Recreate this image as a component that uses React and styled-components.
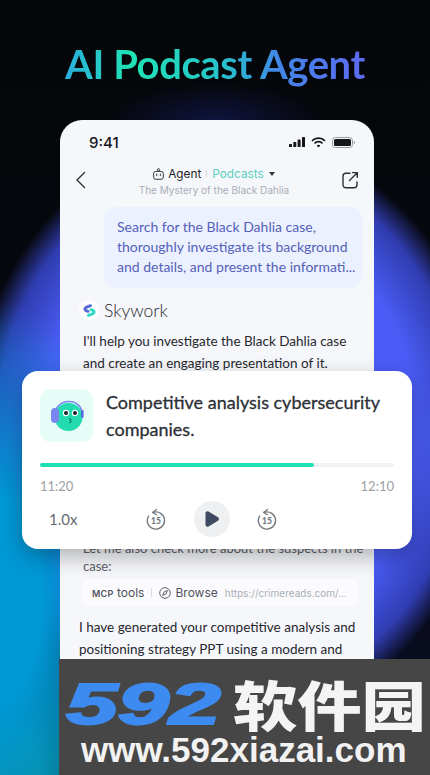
import React from 'react';
import styled, { createGlobalStyle } from 'styled-components';

const GlobalStyle = createGlobalStyle`
  html, body { margin: 0; padding: 0; background: #050608; }
  * { box-sizing: border-box; }
`;

const font = `"Lato", "Noto Sans", sans-serif`;

const Page = styled.div`
  position: relative;
  width: 430px;
  height: 775px;
  overflow: hidden;
  font-family: ${font};
  background:
    radial-gradient(ellipse 110px 40px at 215px 122px, rgba(30, 40, 140, 0.4), rgba(30, 40, 140, 0) 100%),
    radial-gradient(ellipse 150px 300px at -10px 600px, #0098d6 35%, rgba(0, 130, 215, 0) 100%),
    radial-gradient(ellipse 130px 170px at 0px 775px, #0a8c92 30%, rgba(10, 140, 146, 0) 100%),
    radial-gradient(ellipse 260px 297px at 230px 430px, #4a5cf5 72%, rgba(58, 74, 216, 0.8) 90%, rgba(30, 40, 130, 0) 100%),
    linear-gradient(180deg, #050608 0%, #07080f 40%, #0a0d24 100%);
`;

const Title = styled.h1`
  margin: 0;
  height: 120px;
  padding-top: 39px;
  text-align: center;
  font-size: 40px;
  line-height: 50px;
  font-weight: 700;
  letter-spacing: -0.4px;
  white-space: nowrap;
  span {
    background: linear-gradient(90deg, #2aaedd 0%, #1fe3b4 22%, #27c4cc 52%, #4285e8 72%, #5d6af2 100%);
    -webkit-background-clip: text;
    background-clip: text;
    color: transparent;
  }
`;

const Phone = styled.div`
  width: 314px;
  height: 655px;
  margin-left: 60px;
  background: #f6f7fb;
  border-radius: 22px 22px 0 0;
  overflow: hidden;
`;

const StatusBar = styled.div`
  display: flex;
  align-items: center;
  justify-content: space-between;
  height: 40px;
  padding: 4px 19px 0 29px;
  font-family: "Inter", sans-serif;
  font-size: 15px;
  font-weight: 500;
  color: #15161a;
`;

const StatusIcons = styled.div`
  display: flex;
  align-items: center;
  gap: 6px;
`;

const NavBar = styled.div`
  display: flex;
  align-items: center;
  justify-content: space-between;
  height: 43px;
  margin-bottom: 4px;
  padding: 0 15px;
`;

const NavCenter = styled.div`
  display: flex;
  flex-direction: column;
  align-items: center;
  gap: 1px;
`;

const NavTabs = styled.div`
  display: flex;
  align-items: center;
  gap: 4px;
  font-family: "Inter", sans-serif;
  font-size: 11.8px;
  line-height: 16px;
  color: #24262b;
`;

const TabDivider = styled.i`
  width: 1px;
  height: 7px;
  margin: 0 1px;
  background: #d5d7dc;
`;

const ActiveTab = styled.span`
  color: #5ccfbe;
`;

const Caret = styled.i`
  width: 0;
  height: 0;
  margin-left: 1px;
  border-left: 3.5px solid transparent;
  border-right: 3.5px solid transparent;
  border-top: 4px solid #33353a;
`;

const NavSubtitle = styled.div`
  font-family: "Inter", sans-serif;
  font-size: 10px;
  line-height: 15px;
  color: #a9adb8;
  white-space: nowrap;
`;

const Bubble = styled.div`
  width: 258px;
  height: 81px;
  margin: 0 0 0 44px;
  padding: 10px 12px 0 13px;
  background: #ecf1ff;
  border-radius: 12px;
  font-size: 14px;
  line-height: 20px;
  color: #5561b9;
  white-space: nowrap;
`;

const Brand = styled.div`
  display: flex;
  align-items: center;
  gap: 5px;
  margin: 10px 0 0 19px;
  height: 24px;
  font-size: 17.5px;
  font-weight: 300;
  color: #25272c;
`;

const BrandMark = styled.div`
  display: flex;
  align-items: center;
  justify-content: center;
  width: 20px;
  height: 20px;
  border-radius: 50%;
  background: #fff;
`;

const Paragraph = styled.p`
  margin: ${p => p.$top || 0}px 0 0 ${p => p.$left || 23}px;
  font-size: 13.5px;
  line-height: 21.5px;
  color: #26282e;
  white-space: nowrap;
`;

const MutedParagraph = styled.p`
  margin: 165px 0 0 23px;
  font-size: 13px;
  line-height: 18px;
  color: #5d6068;
  white-space: nowrap;
`;

const ToolBox = styled.div`
  display: flex;
  align-items: center;
  width: 274px;
  height: 27px;
  margin: 4px 0 0 23px;
  padding: 0 9px;
  background: #fbfbfd;
  border-radius: 3px;
  font-family: "Inter", sans-serif;
  color: #50535b;
  white-space: nowrap;
`;

const ToolName = styled.span`
  font-size: 12px;
  b { font-size: 9px; font-weight: 600; letter-spacing: 0.3px; }
`;

const ToolDivider = styled.i`
  flex: none;
  width: 1px;
  height: 9px;
  margin: 0 7px;
  background: #d9dbe0;
`;

const BrowseLabel = styled.span`
  margin: 0 7px 0 4px;
  font-size: 12px;
`;

const ToolUrl = styled.span`
  font-size: 10px;
  color: #a9adb5;
`;

const Player = styled.div`
  position: absolute;
  left: 22px;
  top: 371px;
  width: 390px;
  height: 178px;
  padding: 18px 18px 0;
  background: #fff;
  border-radius: 16px;
  box-shadow: 0 8px 22px rgba(0, 0, 0, 0.28);
`;

const PlayerHead = styled.div`
  display: flex;
  gap: 13px;
`;

const Cover = styled.div`
  display: flex;
  align-items: center;
  justify-content: center;
  flex: none;
  width: 53px;
  height: 53px;
  background: #e6fcf7;
  border-radius: 10px;
`;

const PlayerTitle = styled.div`
  font-size: 18px;
  line-height: 27px;
  color: #2c3037;
  -webkit-text-stroke: 0.3px #2c3037;
`;

const Track = styled.div`
  height: 4px;
  margin-top: 20px;
  background: #f0f1f3;
  border-radius: 2px;
`;

const Fill = styled.div`
  height: 100%;
  background: #1fe0b5;
  border-radius: 2px;
`;

const Times = styled.div`
  display: flex;
  justify-content: space-between;
  margin-top: 11px;
  font-size: 13px;
  line-height: 16px;
  color: #9b9fa6;
`;

const Controls = styled.div`
  display: flex;
  align-items: center;
  margin-top: 7px;
  height: 36px;
`;

const Speed = styled.span`
  width: 106px;
  padding-left: 9px;
  font-size: 15px;
  color: #666a70;
`;

const PlayButton = styled.div`
  display: flex;
  align-items: center;
  justify-content: center;
  width: 36px;
  height: 36px;
  margin: 0 27px 0 28px;
  border-radius: 50%;
  background: #eef0f2;
`;

const Watermark = styled.div`
  position: absolute;
  left: 59px;
  top: 659px;
  width: 371px;
  height: 116px;
  background: #464646;
`;

const MarkTop = styled.div`
  display: flex;
  align-items: center;
  height: 72px;
  padding: 18px 0 0 7px;
`;

const MarkNumber = styled.span`
  display: inline-block;
  width: 160px;
  font-family: "Liberation Sans", sans-serif;
  font-size: 58px;
  line-height: 54px;
  font-weight: 700;
  font-style: italic;
  color: #3d8bf0;
  -webkit-text-stroke: 2px #3d8bf0;
  transform: scaleX(1.6);
  transform-origin: left center;
`;

const MarkName = styled.span`
  margin-left: 7px;
  font-family: "Noto Sans CJK SC", sans-serif;
  font-size: 54px;
  line-height: 54px;
  font-weight: 900;
  color: #f4f4f4;
  white-space: nowrap;
  transform: scaleX(1.19);
  transform-origin: left center;
`;

const MarkUrl = styled.div`
  padding-left: 22px;
  font-family: "Liberation Sans", sans-serif;
  font-size: 35px;
  line-height: 38px;
  font-weight: 700;
  color: #f2f2f2;
  white-space: nowrap;
`;

const SignalIcon = () => (
  <svg width="16" height="10" viewBox="0 0 16 10" fill="#15161a">
    <rect x="0" y="7" width="3" height="3" rx="0.6" />
    <rect x="4.3" y="5" width="3" height="5" rx="0.6" />
    <rect x="8.6" y="2.5" width="3" height="7.5" rx="0.6" />
    <rect x="13" y="0" width="3" height="10" rx="0.6" />
  </svg>
);

const WifiIcon = () => (
  <svg width="15" height="11" viewBox="0 0 15 11" fill="none" stroke="#15161a" strokeWidth="1.7">
    <path d="M1 3.8a9.4 9.4 0 0 1 13 0" />
    <path d="M3.5 6.3a5.7 5.7 0 0 1 8 0" />
    <path d="M7.5 10.6 5.7 8.6a2.5 2.5 0 0 1 3.6 0z" fill="#15161a" stroke="none" />
  </svg>
);

const BatteryIcon = () => (
  <svg width="23" height="11" viewBox="0 0 23 11">
    <rect x="0.5" y="0.5" width="20" height="10" rx="3" fill="none" stroke="#9b9ca0" />
    <rect x="2" y="2" width="17" height="7" rx="1.6" fill="#15161a" />
    <path d="M21.8 3.8c.8.3 1.2 1 1.2 1.7s-.4 1.4-1.2 1.7z" fill="#9b9ca0" />
  </svg>
);

const BackIcon = () => (
  <svg width="12" height="22" viewBox="0 0 12 22" fill="none" stroke="#2c2e33" strokeWidth="1.4" strokeLinecap="round" strokeLinejoin="round">
    <path d="M9.5 1.5 2 9l7.5 7.5" />
  </svg>
);

const ShareIcon = () => (
  <svg width="18" height="22" viewBox="0 0 18 22" fill="none" stroke="#2c2e33" strokeWidth="1.4" strokeLinecap="round" strokeLinejoin="round">
    <path d="M9 2.2H5a3 3 0 0 0-3 3v8.6a3 3 0 0 0 3 3h8a3 3 0 0 0 3-3V11" />
    <path d="M8.5 9.5 16 2M11.5 1.6h4.8v4.6" />
  </svg>
);

const RobotIcon = () => (
  <svg width="11" height="12" viewBox="0 0 11 12" fill="none" stroke="#33353a" strokeWidth="1">
    <rect x="0.7" y="3.4" width="9.6" height="7.9" rx="2" />
    <circle cx="5.5" cy="1.7" r="1.1" />
    <path d="M3.7 6v1.6M7.3 6v1.6" strokeLinecap="round" />
  </svg>
);

const SkyworkMark = () => (
  <svg width="13" height="13" viewBox="0 0 13 13" fill="none" strokeWidth="2.8" strokeLinecap="round">
    <path d="M7.5 1.6 3 3.4C1.4 4.2 1.4 6 3 6.6l2 .8" stroke="#5868d8" />
    <path d="M5.5 11.4 10 9.6c1.6-.8 1.6-2.6 0-3.2l-2-.8" stroke="#2fd8c0" />
  </svg>
);

const AvatarIcon = () => (
  <svg width="36" height="36" viewBox="0 0 36 36">
    <path d="M6 17C6 9 12 3.5 20 3.5S33 9 33 16" fill="none" stroke="#7a86ee" strokeWidth="1.6" />
    <circle cx="19.5" cy="19" r="14" fill="#22dcb0" />
    <rect x="2" y="10" width="8" height="15" rx="4" fill="#7a86ee" />
    <rect x="32" y="12" width="2.6" height="8" rx="1.3" fill="#5a6be0" />
    <circle cx="17" cy="15" r="3.2" fill="#fff" />
    <circle cx="26" cy="15" r="3.2" fill="#fff" />
    <circle cx="17" cy="15" r="2" fill="#14232a" />
    <circle cx="26" cy="15" r="2" fill="#14232a" />
    <path d="M20.5 20.5c1.8.4 1.8 1.6.4 2 1.6.4 1.6 1.8-.4 2.2" fill="none" stroke="#14504a" strokeWidth="1" strokeLinecap="round" />
  </svg>
);

const SkipIcon = () => (
  <svg width="20" height="22" viewBox="0 0 20 22">
    <path d="M7 4.4A8.6 8.6 0 1 1 2.6 8" fill="none" stroke="#74787f" strokeWidth="1.4" strokeLinecap="round" />
    <path d="M10.5 1.4 6.6 4.4l3.9 2.4" fill="none" stroke="#74787f" strokeWidth="1.2" strokeLinecap="round" strokeLinejoin="round" />
    <text x="10" y="16.2" textAnchor="middle" fontFamily="Lato, sans-serif" fontSize="8.5" fontWeight="900" fill="#74787f">15</text>
  </svg>
);

const PlayIcon = () => (
  <svg width="16" height="18" viewBox="0 0 16 18">
    <path d="M1.5 3.2c0-1.6 1.7-2.5 3-1.7l9.5 5.8c1.2.8 1.2 2.6 0 3.4l-9.5 5.8c-1.3.8-3-.1-3-1.7z" fill="#3f4a63" />
  </svg>
);

const CompassIcon = () => (
  <svg width="12" height="12" viewBox="0 0 12 12" fill="none" stroke="#50535b" strokeWidth="0.9" style={{ flex: 'none' }}>
    <circle cx="6" cy="6" r="5.3" />
    <path d="M8.4 3.4 7 7 3.6 8.4 5 5z" />
  </svg>
);

export default function App() {
  return (
    <>
      <GlobalStyle />
      <Page>
        <Title><span>AI Podcast Agent</span></Title>
        <Phone>
          <StatusBar>
            <span>9:41</span>
            <StatusIcons>
              <SignalIcon />
              <WifiIcon />
              <BatteryIcon />
            </StatusIcons>
          </StatusBar>
          <NavBar>
            <BackIcon />
            <NavCenter>
              <NavTabs>
                <RobotIcon />
                <span>Agent</span>
                <TabDivider />
                <ActiveTab>Podcasts</ActiveTab>
                <Caret />
              </NavTabs>
              <NavSubtitle>The Mystery of the Black Dahlia</NavSubtitle>
            </NavCenter>
            <ShareIcon />
          </NavBar>
          <Bubble>
            Search for the Black Dahlia case,<br />
            thoroughly investigate its background<br />
            and details, and present the informati...
          </Bubble>
          <Brand>
            <BrandMark><SkyworkMark /></BrandMark>
            Skywork
          </Brand>
          <Paragraph $top={9}>
            I'll help you investigate the Black Dahlia case<br />
            and create an engaging presentation of it.
          </Paragraph>
          <MutedParagraph>
            Let me also check more about the suspects in the<br />
            case:
          </MutedParagraph>
          <ToolBox>
            <ToolName><b>MCP</b> tools</ToolName>
            <ToolDivider />
            <CompassIcon />
            <BrowseLabel>Browse</BrowseLabel>
            <ToolUrl>https://crimereads.com/...</ToolUrl>
          </ToolBox>
          <Paragraph $top={11} $left={19}>
            I have generated your competitive analysis and<br />
            positioning strategy PPT using a modern and
          </Paragraph>
        </Phone>
        <Player>
          <PlayerHead>
            <Cover><AvatarIcon /></Cover>
            <PlayerTitle>Competitive analysis cybersecurity companies.</PlayerTitle>
          </PlayerHead>
          <Track><Fill style={{ width: `${(274 / 354) * 100}%` }} /></Track>
          <Times><span>11:20</span><span>12:10</span></Times>
          <Controls>
            <Speed>1.0x</Speed>
            <SkipIcon />
            <PlayButton><PlayIcon /></PlayButton>
            <SkipIcon />
          </Controls>
        </Player>
        <Watermark>
          <MarkTop>
            <MarkNumber>592</MarkNumber>
            <MarkName>软件园</MarkName>
          </MarkTop>
          <MarkUrl>www.592xiazai.com</MarkUrl>
        </Watermark>
      </Page>
    </>
  );
}
